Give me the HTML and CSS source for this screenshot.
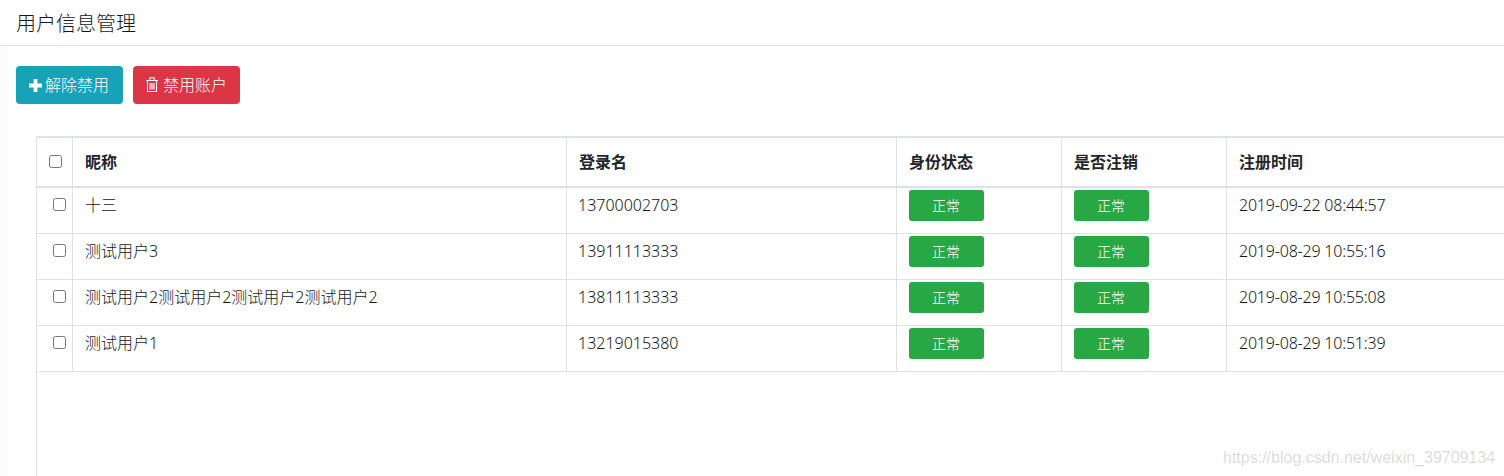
FILE: index.html
```html
<!DOCTYPE html>
<html lang="zh">
<head>
<meta charset="utf-8">
<title>用户信息管理</title>
<link rel="stylesheet" href="styles.css">
</head>
<body>
<header class="page-title">用户信息管理</header>
<div class="toolbar">
  <button class="btn btn-info"><svg class="icon icon-plus" viewBox="0 0 13 13" width="13" height="13"><path d="M4.6 0h3.8v4.6H13v3.8H8.4V13H4.6V8.4H0V4.6h4.6z" fill="#fff"/></svg>解除禁用</button>
  <button class="btn btn-danger"><svg class="icon icon-trash" viewBox="0 0 12 15" width="12" height="15"><path d="M0 3.5h12M3.8 3.2V.8h4.4v2.4M1.5 3.5v11h9v-11" fill="none" stroke="#fff" stroke-width="1.1"/><path d="M3.5 6h1.2v6.5H3.5zM5.4 6h1.2v6.5H5.4zM7.3 6h1.2v6.5H7.3z" fill="#fff"/></svg>禁用账户</button>
</div>
<div class="table-wrap">
  <table class="data-table">
    <colgroup>
      <col class="c-check"><col class="c-name"><col class="c-login"><col class="c-state"><col class="c-state"><col class="c-time">
    </colgroup>
    <thead>
      <tr><th class="check-head"><input type="checkbox"></th><th>昵称</th><th>登录名</th><th>身份状态</th><th>是否注销</th><th>注册时间</th></tr>
    </thead>
    <tbody>
      <tr><td class="check-cell"><input type="checkbox"></td><td>十三</td><td class="login-cell">13700002703</td><td class="tag-cell"><span class="tag">正常</span></td><td class="tag-cell"><span class="tag">正常</span></td><td class="time-cell">2019-09-22 08:44:57</td></tr>
      <tr><td class="check-cell"><input type="checkbox"></td><td>测试用户3</td><td class="login-cell">13911113333</td><td class="tag-cell"><span class="tag">正常</span></td><td class="tag-cell"><span class="tag">正常</span></td><td class="time-cell">2019-08-29 10:55:16</td></tr>
      <tr><td class="check-cell"><input type="checkbox"></td><td>测试用户2测试用户2测试用户2测试用户2</td><td class="login-cell">13811113333</td><td class="tag-cell"><span class="tag">正常</span></td><td class="tag-cell"><span class="tag">正常</span></td><td class="time-cell">2019-08-29 10:55:08</td></tr>
      <tr><td class="check-cell"><input type="checkbox"></td><td>测试用户1</td><td class="login-cell">13219015380</td><td class="tag-cell"><span class="tag">正常</span></td><td class="tag-cell"><span class="tag">正常</span></td><td class="time-cell">2019-08-29 10:51:39</td></tr>
    </tbody>
  </table>
</div>
<div class="watermark">https://blog.csdn.net/weixin_39709134</div>
</body>
</html>
```
FILE: styles.css
```css
html, body { margin: 0; padding: 0; height: 476px; overflow: hidden; }
body { background: linear-gradient(to right, #fbfbfb 7px, #fff 7px); font-family: "Noto Sans", "Noto Sans CJK SC", sans-serif; font-size: 16px; font-weight: 300; line-height: 24px; color: #14171a; position: relative; display: flex; flex-direction: column; }
.page-title { height: 45px; padding-left: 16px; font-size: 20px; line-height: 47px; background: #fff; border-bottom: 1px solid #dee2e6; flex: none; }
.toolbar { display: flex; gap: 10px; padding: 20px 16px 32px; flex: none; }
.btn { display: flex; align-items: center; width: 107px; height: 38px; padding: 0; border: 0; border-radius: 4px; font: inherit; color: #fff; }
.btn-info { background: #17a2b8; padding-left: 13px; }
.btn-danger { background: #dc3545; padding-left: 13px; }
.icon { flex: none; }
.icon-plus { margin-right: 3px; }
.icon-trash { margin-right: 5px; margin-top: -1px; }
.table-wrap { margin-left: 36px; flex: 1; background: #fff; border-left: 1px solid #dee2e6; border-top: 2px solid #dee2e6; border-top-left-radius: 2px; overflow: hidden; }
.data-table { border-collapse: separate; border-spacing: 0; table-layout: fixed; width: 1500px; }
.c-check { width: 36px; }
.c-name { width: 494px; }
.c-login { width: 330px; }
.c-state { width: 165px; }
.c-time { width: 310px; }
th, td { text-align: left; vertical-align: top; padding: 5px 12px 16px; border-right: 1px solid #dee2e6; border-bottom: 1px solid #dee2e6; height: 24px; }
th { padding: 12px; border-bottom-width: 2px; font-weight: 700; color: #212529; }
.check-head, .check-cell { padding: 0; }
input[type="checkbox"] { margin: 0; width: 13px; height: 13px; display: block; }
.check-head input { margin: 17px 0 0 12px; }
.check-cell input { margin: 10px 0 0 16px; }
.tag-cell { padding: 2px 12px 12px; }
.login-cell { text-indent: -1px; }
.time-cell { letter-spacing: -0.2px; }
.tag { display: block; width: 75px; height: 31px; padding-right: 1px; box-sizing: border-box; border-radius: 3px; background: #28a745; color: #fff; font-size: 14px; line-height: 31px; text-align: center; }
.watermark { position: absolute; left: 1223px; top: 447px; font-family: "Liberation Sans", sans-serif; font-size: 16px; line-height: 22px; color: rgba(150,150,150,0.35); white-space: nowrap; }
```
